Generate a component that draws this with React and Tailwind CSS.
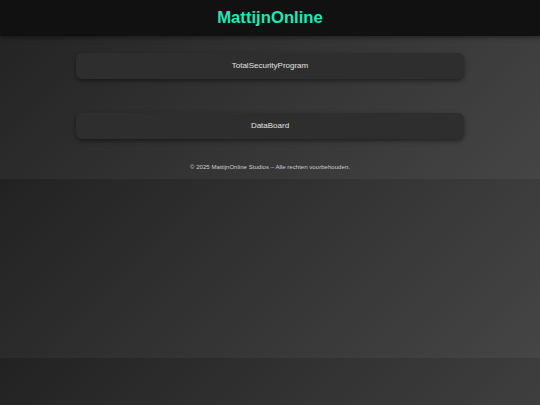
import React from "react";

const links = ["TotalSecurityProgram", "DataBoard"];

const App = () => {
  return (
    <div className="min-h-screen w-full bg-[linear-gradient(135deg,#222222,#454545)] bg-[length:100%_179px] font-['Liberation_Sans',Arial,sans-serif]">
      {/* header */}
      <header className="h-[36px] flex items-center justify-center bg-[#111111] shadow-[0_2px_4px_rgba(0,0,0,0.35)]">
        <h1 className="text-[16.7px] font-bold leading-none text-[#1de9b6]">
          MattijnOnline
        </h1>
      </header>

      {/* links */}
      <main className="flex flex-col items-center pt-[17px] gap-[34px]">
        {links.map((name) => (
          <a
            key={name}
            href="#"
            className="w-[388px] h-[26px] flex items-center justify-center rounded-[6px] bg-[#2e2e2e] shadow-[0_2px_4px_rgba(0,0,0,0.45)] text-[8px] text-[#e2e2e2]"
          >
            {name}
          </a>
        ))}
      </main>

      <footer className="h-[40px] flex items-end justify-center pb-[8px]">
        <p className="text-[6.1px] leading-[8px] text-[#cccccc]">
          © 2025 MattijnOnline Studios – Alle rechten voorbehouden.
        </p>
      </footer>
    </div>
  );
};

export default App;
